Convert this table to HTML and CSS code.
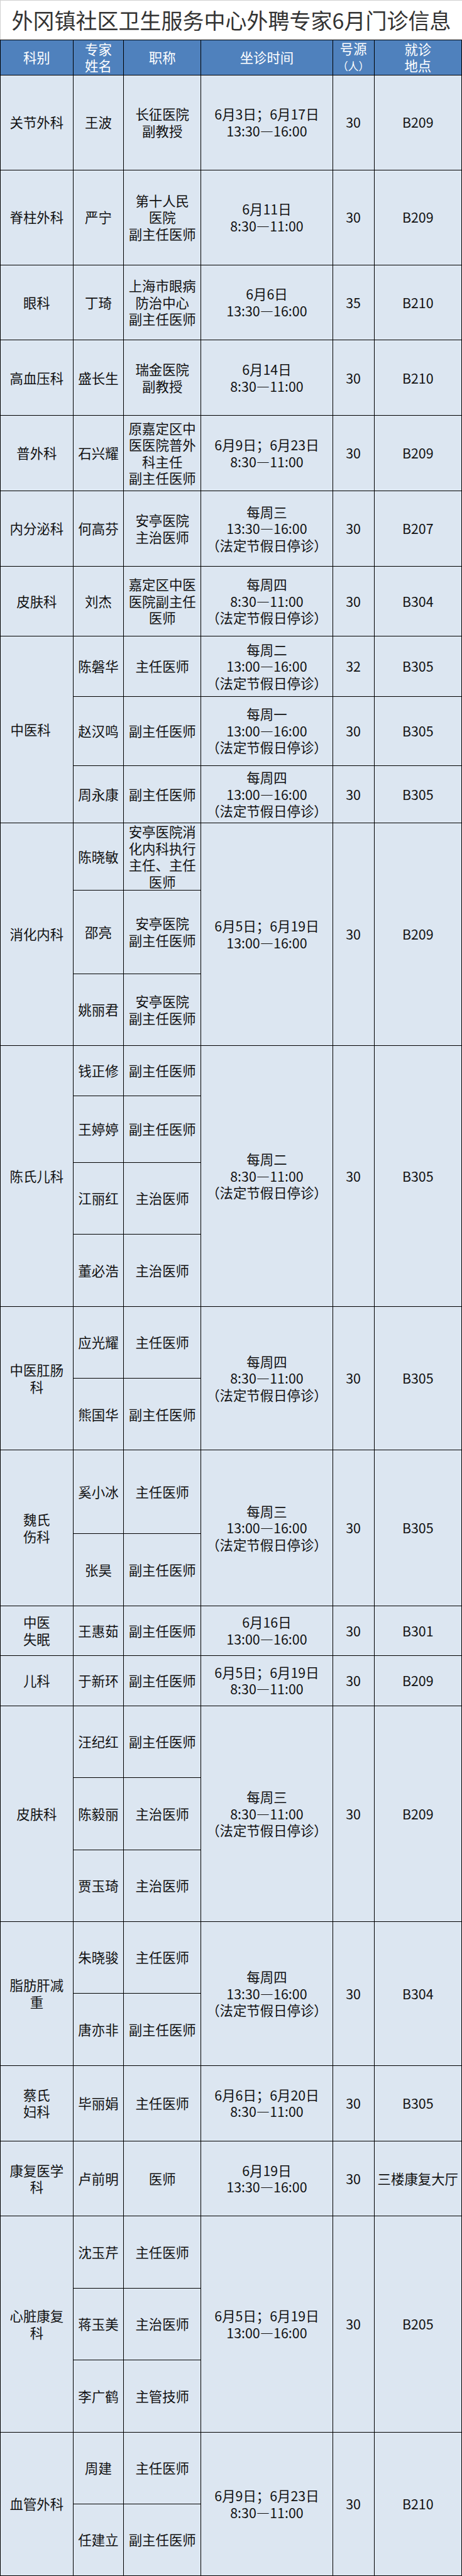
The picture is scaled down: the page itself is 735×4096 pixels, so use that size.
FILE: index.html
```html
<!DOCTYPE html>
<html lang="zh-CN">
<head>
<meta charset="utf-8">
<title>外冈镇社区卫生服务中心外聘专家6月门诊信息</title>
<link rel="stylesheet" href="styles.css">
</head>
<body>
<div class="page">
  <h1 class="title">外冈镇社区卫生服务中心外聘专家6月门诊信息</h1>
  <table class="sched">
    <colgroup>
      <col class="c-dept"><col class="c-name"><col class="c-title"><col class="c-time"><col class="c-num"><col class="c-loc">
    </colgroup>
    <thead>
      <tr class="head">
        <th>科别</th>
        <th>专家<br>姓名</th>
        <th>职称</th>
        <th>坐诊时间</th>
        <th>号源<br><span class="ren">（人）</span></th>
        <th>就诊<br>地点</th>
      </tr>
    </thead>
    <tbody>
      <tr class="h165"><td>关节外科</td><td>王波</td><td>长征医院<br>副教授</td><td>6月3日；6月17日<br>13:30—16:00</td><td>30</td><td>B209</td></tr>
      <tr class="h165"><td>脊柱外科</td><td>严宁</td><td>第十人民<br>医院<br>副主任医师</td><td>6月11日<br>8:30—11:00</td><td>30</td><td>B209</td></tr>
      <tr class="h131"><td>眼科</td><td>丁琦</td><td>上海市眼病<br>防治中心<br>副主任医师</td><td>6月6日<br>13:30—16:00</td><td>35</td><td>B210</td></tr>
      <tr class="h131"><td>高血压科</td><td>盛长生</td><td>瑞金医院<br>副教授</td><td>6月14日<br>8:30—11:00</td><td>30</td><td>B210</td></tr>
      <tr class="h131"><td>普外科</td><td>石兴耀</td><td>原嘉定区中<br>医医院普外<br>科主任<br>副主任医师</td><td>6月9日；6月23日<br>8:30—11:00</td><td>30</td><td>B209</td></tr>
      <tr class="h131"><td>内分泌科</td><td>何高芬</td><td>安亭医院<br>主治医师</td><td>每周三<br>13:30—16:00<br><span class="note">（法定节假日停诊）</span></td><td>30</td><td>B207</td></tr>
      <tr class="h121"><td>皮肤科</td><td>刘杰</td><td>嘉定区中医<br>医院副主任<br>医师</td><td>每周四<br>8:30—11:00<br><span class="note">（法定节假日停诊）</span></td><td>30</td><td>B304</td></tr>

      <tr class="h105"><td class="left" rowspan="3">中医科</td><td>陈磐华</td><td>主任医师</td><td>每周二<br>13:00—16:00<br><span class="note">（法定节假日停诊）</span></td><td>32</td><td>B305</td></tr>
      <tr class="h120"><td>赵汉鸣</td><td>副主任医师</td><td>每周一<br>13:00—16:00<br><span class="note">（法定节假日停诊）</span></td><td>30</td><td>B305</td></tr>
      <tr class="h100"><td>周永康</td><td>副主任医师</td><td>每周四<br>13:00—16:00<br><span class="note">（法定节假日停诊）</span></td><td>30</td><td>B305</td></tr>

      <tr class="h116"><td rowspan="3">消化内科</td><td>陈晓敏</td><td>安亭医院消<br>化内科执行<br>主任、主任<br>医师</td><td rowspan="3">6月5日；6月19日<br>13:00—16:00</td><td rowspan="3">30</td><td rowspan="3">B209</td></tr>
      <tr class="h145"><td>邵亮</td><td>安亭医院<br>副主任医师</td></tr>
      <tr class="h125"><td>姚丽君</td><td>安亭医院<br>副主任医师</td></tr>

      <tr class="h87"><td rowspan="4">陈氏儿科</td><td>钱正修</td><td>副主任医师</td><td rowspan="4">每周二<br>8:30—11:00<br><span class="note">（法定节假日停诊）</span></td><td rowspan="4">30</td><td rowspan="4">B305</td></tr>
      <tr class="h116"><td>王婷婷</td><td>副主任医师</td></tr>
      <tr class="h125"><td>江丽红</td><td>主治医师</td></tr>
      <tr class="h125"><td>董必浩</td><td>主治医师</td></tr>

      <tr class="h125"><td rowspan="2">中医肛肠<br>科</td><td>应光耀</td><td>主任医师</td><td rowspan="2">每周四<br>8:30—11:00<br><span class="note">（法定节假日停诊）</span></td><td rowspan="2">30</td><td rowspan="2">B305</td></tr>
      <tr class="h125"><td>熊国华</td><td>副主任医师</td></tr>

      <tr class="h145"><td rowspan="2">魏氏<br>伤科</td><td>奚小冰</td><td>主任医师</td><td rowspan="2">每周三<br>13:00—16:00<br><span class="note">（法定节假日停诊）</span></td><td rowspan="2">30</td><td rowspan="2">B305</td></tr>
      <tr class="h125"><td>张昊</td><td>副主任医师</td></tr>

      <tr class="h87"><td>中医<br>失眠</td><td>王惠茹</td><td>副主任医师</td><td>6月16日<br>13:00—16:00</td><td>30</td><td>B301</td></tr>
      <tr class="h87"><td>儿科</td><td>于新环</td><td>副主任医师</td><td>6月5日；6月19日<br>8:30—11:00</td><td>30</td><td>B209</td></tr>

      <tr class="h125"><td rowspan="3">皮肤科</td><td>汪纪红</td><td>副主任医师</td><td rowspan="3">每周三<br>8:30—11:00<br><span class="note">（法定节假日停诊）</span></td><td rowspan="3">30</td><td rowspan="3">B209</td></tr>
      <tr class="h125"><td>陈毅丽</td><td>主治医师</td></tr>
      <tr class="h125"><td>贾玉琦</td><td>主治医师</td></tr>

      <tr class="h125"><td rowspan="2">脂肪肝减<br>重</td><td>朱晓骏</td><td>主任医师</td><td rowspan="2">每周四<br>13:30—16:00<br><span class="note">（法定节假日停诊）</span></td><td rowspan="2">30</td><td rowspan="2">B304</td></tr>
      <tr class="h125"><td>唐亦非</td><td>副主任医师</td></tr>

      <tr class="h131"><td>蔡氏<br>妇科</td><td>毕丽娟</td><td>主任医师</td><td>6月6日；6月20日<br>8:30—11:00</td><td>30</td><td>B305</td></tr>
      <tr class="h131"><td>康复医学<br>科</td><td>卢前明</td><td>医师</td><td>6月19日<br>13:30—16:00</td><td>30</td><td>三楼康复大厅</td></tr>

      <tr class="h125"><td rowspan="3">心脏康复<br>科</td><td>沈玉芹</td><td>主任医师</td><td rowspan="3">6月5日；6月19日<br>13:00—16:00</td><td rowspan="3">30</td><td rowspan="3">B205</td></tr>
      <tr class="h125"><td>蒋玉美</td><td>主治医师</td></tr>
      <tr class="h125"><td>李广鹤</td><td>主管技师</td></tr>

      <tr class="h125"><td rowspan="2">血管外科</td><td>周建</td><td>主任医师</td><td rowspan="2">6月9日；6月23日<br>8:30—11:00</td><td rowspan="2">30</td><td rowspan="2">B210</td></tr>
      <tr class="h125"><td>任建立</td><td>副主任医师</td></tr>
    </tbody>
  </table>
</div>
</body>
</html>
```
FILE: styles.css
```css
html, body {
  margin: 0;
  padding: 0;
  background: #ffffff;
}

.page {
  width: 735px;
  font-family: "Noto Sans CJK SC", "Noto Sans", sans-serif;
}

.title {
  margin: 0;
  height: 62.5px;
  display: flex;
  align-items: center;
  justify-content: center;
  font-size: 34px;
  font-weight: normal;
  line-height: 40px;
  color: #333333;
  box-sizing: border-box;
  border-top: 1px solid #d0d0d0;
  border-left: 1px solid #d0d0d0;
}

.sched {
  width: 734px;
  table-layout: fixed;
  border-collapse: collapse;
  font-size: 21.4px;
  line-height: 26.5px;
  color: #111111;
}

.c-dept { width: 115.7px; }
.c-name { width: 80.5px; }
.c-title { width: 123px; }
.c-time { width: 209.5px; }
.c-num { width: 65.9px; }
.c-loc { width: 139.4px; }

.sched th,
.sched td {
  border: 1px solid #000000;
  padding: 0 1px;
  text-align: center;
  vertical-align: middle;
}

.sched th {
  background: #4f81bd;
  color: #ffffff;
  font-weight: normal;
}

.sched td {
  background: #dce6f1;
}

.sched td.left {
  text-align: left;
  padding-left: 15.5px;
}

.ren {
  font-size: 17px;
  font-feature-settings: "halt";
}

.note {
  font-feature-settings: "halt";
}

.head { height: 52.8px; }
.h165 { height: 151px; }
.h131 { height: 119.9px; }
.h121 { height: 110.7px; }
.h105 { height: 96.1px; }
.h120 { height: 109.8px; }
.h100 { height: 91.5px; }
.h116 { height: 106.1px; }
.h145 { height: 132.7px; }
.h125 { height: 114.4px; }
.h87 { height: 79.6px; }
```
